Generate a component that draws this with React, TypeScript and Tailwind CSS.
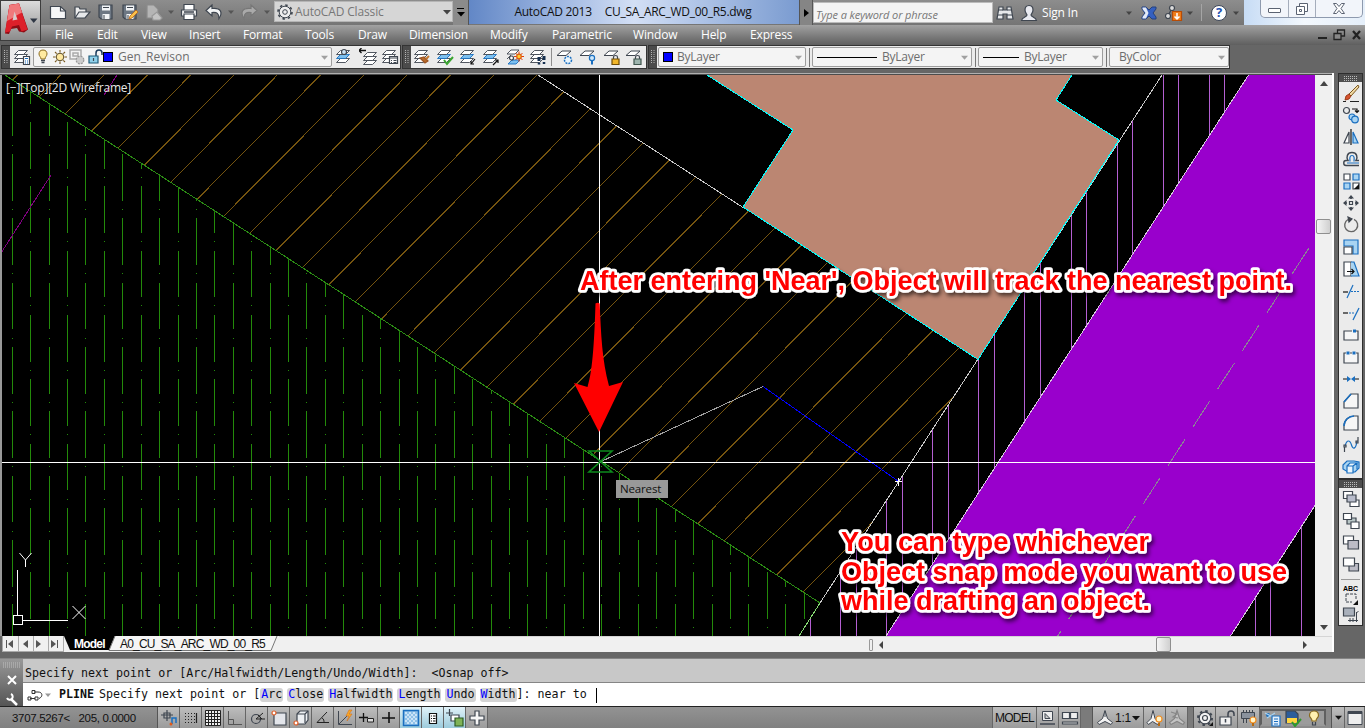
import React, { ReactNode } from "react";

const ink = "#3f4650";
const blue = "#1a6fc0";
const sky = "#a9d4f2";

function Ic({ children, className = "" }: { children: ReactNode; className?: string }) {
  return (
    <svg viewBox="0 0 18 18" width="18" height="18" fill="none" stroke={ink} strokeWidth="1.2" className={"shrink-0 " + className}>
      {children}
    </svg>
  );
}

function Cell({ w, children }: { w: string; children?: ReactNode }) {
  return <div className={"flex h-full shrink-0 items-center justify-center " + w}>{children}</div>;
}

function Caret({ color = "#333", s = 7 }: { color?: string; s?: number }) {
  return (
    <svg width={s} height={s} viewBox="0 0 8 8" className="shrink-0">
      <path d="M0 2h8L4 6.5z" fill={color} />
    </svg>
  );
}

/* ---------- title bar ---------- */

function AppButton() {
  return (
    <div className="flex h-[41px] w-[41px] shrink-0 items-center border border-[#3d3d3d] bg-linear-to-b from-[#dcdcdc] via-[#b4b4b4] to-[#8c8c8c]">
      <svg width="39" height="39" viewBox="0 0 39 39">
        <path d="M4 32.500L8.500 4 18 2.500l9 26-4 3-5-1-2-3.500-6 1-2 5z" fill="#8d0c14" />
        <path d="M4 31.500L8.500 4l9.500-1.500 8.500 26-6 2-2.500-6.500-7 1.500L9 30.500z" fill="#dd202a" />
        <path d="M8.500 4l9.500-1.500 3 9C16 14 10 18 6 20z" fill="#f0797c" />
        <path d="M11.500 19.500l2-9 3 8z" fill="#d9c9ca" />
        <path d="M29 17.500h7.500l-3.750 4.500z" fill="#2f3744" />
      </svg>
    </div>
  );
}

const Floppy = ({ pen }: { pen?: boolean }) => (
  <Ic>
    <path d="M2 2h13v14H4l-2-2z" fill="#6d7783" />
    <path d="M5 2.500h8v5H5zM5.500 11h7v5h-7z" fill="#f2f4f6" stroke="none" />
    <path d="M7 12v4M6 4.500h6" strokeWidth="1" />
    {pen && <path d="M8 16l1-3 6-6 2 2-6 6z" fill="#f9c04a" stroke="#b6661a" strokeWidth=".8" />}
  </Ic>
);

function QuickAccess() {
  return (
    <div className="flex h-full w-[233px] shrink-0 items-center pl-[5px] pb-px">
      <Cell w="w-[24px]">
        <Ic><path d="M1.500 3.500h10l5 4.500v7.500h-15z" fill="#f6f7f8" /><path d="M11.500 3.500v4.500h5" /></Ic>
      </Cell>
      <Cell w="w-[24px]">
        <Ic><path d="M2 15V4h4l1 2h6v3" fill="#eee" /><path d="M2 15l4-6h11l-5 6z" fill="#e6e8ea" /></Ic>
      </Cell>
      <Cell w="w-[24px]"><Floppy /></Cell>
      <Cell w="w-[24px]"><Floppy pen /></Cell>
      <Cell w="w-[24px]">
        <Ic><path d="M2 2h7l4 4v9H2z" fill="#b5b5b5" stroke="#8b8b8b" /><path d="M7 13l5-4 5 6-2 2H8z" fill="#c4c4c4" stroke="#999" /></Ic>
      </Cell>
      <Cell w="w-[10px]"><Caret color="#555" s={6} /></Cell>
      <Cell w="w-[26px]">
        <Ic><path d="M4 7V1.500h10V7" fill="#fff" /><path d="M1.500 7h15v6h-15z" fill="#f0f0f0" /><path d="M4 11h10v5.500H4z" fill="#fff" /><path d="M4 9h10" strokeWidth="1.500" /></Ic>
      </Cell>
      <Cell w="w-[24px]">
        <Ic><path d="M7 2L1 7.500 7 13V9.500c5-.6 7 1 7 6 4-6 2-11-7-10z" fill="#f2f4f5" /></Ic>
      </Cell>
      <Cell w="w-[10px]"><Caret color="#555" s={6} /></Cell>
      <Cell w="w-[26px]">
        <Ic><path d="M11 2l6 5.500L11 13V9.500c-5-.6-7 1-7 6-4-6-2-11 7-10z" fill="#aaa" stroke="#777" /></Ic>
      </Cell>
      <Cell w="w-[10px]"><Caret color="#555" s={6} /></Cell>
    </div>
  );
}

function TitleBar() {
  return (
    <div className="flex h-[25px] shrink-0 items-stretch bg-linear-to-b from-[#8d8d8d] to-[#757575]">
      <QuickAccess />
      <div className="flex h-[21px] w-[179px] shrink-0 items-center border border-[#b5b5b5] bg-[#d6d6d6] pl-[1px] pr-[1px] mt-px">
        <Ic>
          <circle cx="9" cy="9" r="5.800" fill="#eee" strokeWidth="1" /><circle cx="9" cy="9" r="7" strokeDasharray="2.500 3" strokeWidth="1.600" /><circle cx="9" cy="9" r="2.300" strokeWidth="1" />
        </Ic>
        <span className="ml-[1px] grow whitespace-nowrap text-[12px] tracking-[-0.15px] text-[#777]">AutoCAD Classic</span>
        <Caret color="#444" s={8} />
      </div>
      <div className="flex w-[16px] shrink-0 flex-col items-center justify-center gap-[1px] border-r border-[#555] bg-[#8b8b8b]">
        <div className="h-[1px] w-[7px] bg-black" />
        <Caret color="#000" s={8} />
      </div>
      <div className="flex h-[24px] w-[330px] shrink-0 items-center justify-center gap-[13px] whitespace-pre bg-linear-to-r from-[#6287c6] via-[#d3dff5] to-[#7a9bd0] pr-[2px] text-[12px] tracking-[-0.3px] text-[#111]">
        <span>AutoCAD 2013</span>
        <span>CU_SA_ARC_WD_00_R5.dwg</span>
      </div>
      <div className="flex w-[14px] shrink-0 items-center justify-center border-x border-[#555] bg-[#858585]">
        <svg width="5" height="8" viewBox="0 0 5 8"><path d="M0 0l5 4-5 4z" fill="#000" /></svg>
      </div>
      <div className="flex h-[21px] w-[180px] shrink-0 items-center self-center whitespace-nowrap border border-[#bbb] bg-[#f4f4f4] pl-[2px] pt-[3px] text-[11px] italic tracking-[-0.12px] text-[#777]">
        Type a keyword or phrase
      </div>
      <div className="flex w-[251px] shrink-0 items-center">
        <Cell w="w-[24px]">
          <Ic><path d="M3 3h4v3h4V3h4l2 12h-6v-5H7v5H1z" fill="#e6e8ea" /><path d="M3 6h4M11 6h4M2 11h5M11 11h5" /></Ic>
        </Cell>
        <Cell w="w-[24px]">
          <Ic><path d="M9 1.500c3 0 4 2 4 4.500s-1.500 4-2 5c0 2 5 2 5.500 5.500h-15C2 13 7 13 7 11c-.5-1-2-2.500-2-5s1-4.500 4-4.500z" fill="#e9eaf0" /></Ic>
        </Cell>
        <span className="ml-px w-[82px] whitespace-nowrap text-[12px] tracking-[-0.2px] text-white">Sign In</span>
        <Cell w="w-[10px]"><Caret color="#444" s={6} /></Cell>
        <Cell w="w-[29px]">
          <Ic><path d="M2 3h4l3 3 3-3h4v2l-3 4 3 4v2h-4l-3-3-3 3H2v-2l3-4-3-4z" fill="#3560c0" stroke="#25407d" strokeWidth="1" /><path d="M2.500 3.500H6L8.500 9 6 14.500H2.500V13l3-4-3-4z" fill="#e3eaf6" stroke="none" /></Ic>
        </Cell>
        <Cell w="w-[22px]">
          <Ic><circle cx="7" cy="4" r="2.500" fill="#ddd" /><circle cx="3" cy="12" r="2.500" fill="#ddd" /><path d="M6 6l-2 4" /><path d="M7.500 7.500h9v9h-9z" fill="#f07d1a" stroke="#b74c06" /><path d="M12 9v6M9.500 12.500L12 15l2.500-2.500" stroke="#fff" strokeWidth="1.500" /></Ic>
        </Cell>
        <Cell w="w-[10px]"><Caret color="#444" s={6} /></Cell>
        <div className="mx-[6px] h-[17px] w-[1px] bg-[#a5a5a5]" />
        <Cell w="w-[22px]">
          <div className="flex h-[16px] w-[16px] items-center justify-center rounded-full border border-[#3c4657] bg-white text-[13px] font-bold leading-none text-[#1f52b0]">?</div>
        </Cell>
        <Cell w="w-[12px]"><Caret color="#444" s={6} /></Cell>
      </div>
      <div className="flex grow items-start justify-end bg-linear-to-r from-[#c7dcf5] via-[#f3f8fd] to-[#e5effa] pr-[2px]">
        <div className="flex h-[18px] w-[103px] rounded-b-[5px] border border-t-0 border-[#8e9aae] bg-[#f2f5fa]">
          <div className="flex w-[28px] items-center justify-center border-r border-[#a5adbb]">
            <div className="mt-[3px] h-[5px] w-[13px] rounded-[1px] border border-[#5b6372] bg-white" />
          </div>
          <div className="flex w-[27px] items-center justify-center border-r border-[#a5adbb]">
            <svg width="12" height="12" viewBox="0 0 12 12" fill="#fff" stroke="#5b6372"><path d="M3.500.5h8v8h-8z" /><path d="M.5 3.500h8v8h-8z" /><path d="M3.500 6.500h2v2h-2z" /></svg>
          </div>
          <div className="flex grow items-center justify-center">
            <svg width="12" height="11" viewBox="0 0 12 11"><path d="M.5.5h3L6 3.500 8.500.5h3L8 5.500l3.500 5h-3L6 7.500l-2.500 3h-3L4 5.500z" fill="#fff" stroke="#5b6372" /></svg>
          </div>
        </div>
      </div>
    </div>
  );
}

function MenuBar() {
  return (
    <div className="flex h-[20px] shrink-0 items-center bg-linear-to-b from-[#a2a2a2] to-[#5f5f5f] pl-[14px] text-[12px] tracking-[-0.15px] text-white">
      <span className="w-[42px]">File</span>
      <span className="w-[44px]">Edit</span>
      <span className="w-[48px]">View</span>
      <span className="w-[54px]">Insert</span>
      <span className="w-[62px]">Format</span>
      <span className="w-[53px]">Tools</span>
      <span className="w-[51px]">Draw</span>
      <span className="w-[81px]">Dimension</span>
      <span className="w-[62px]">Modify</span>
      <span className="w-[81px]">Parametric</span>
      <span className="w-[68px]">Window</span>
      <span className="w-[49px]">Help</span>
      <span className="grow">Express</span>
      <svg width="46" height="14" viewBox="0 0 46 14" fill="none" stroke="#222" strokeWidth="1.300" className="mr-[2px]">
        <path d="M1 10h9" strokeWidth="2" /><path d="M20.500 2h7v6h-7z" /><path d="M17 5.500h7v6h-7z" fill="#888" /><path d="M36 3l7 8M43 3l-7 8" strokeWidth="2.300" />
      </svg>
    </div>
  );
}

/* ---------- layer toolbar ---------- */

function Grip() {
  return (
    <div className="flex h-full w-[8px] shrink-0 items-center justify-center bg-[#4b4b4b]">
      <svg width="4" height="14" viewBox="0 0 4 14"><path d="M.5 0v14M3 0v14" stroke="#b5b5b5" strokeDasharray="1 1" /></svg>
    </div>
  );
}

const sheets = (
  <g strokeWidth=".9">
    <path d="M1.500 14.500l4-4h9l-4 4z" fill="#fff" />
    <path d="M1.500 10.500l4-4h9l-4 4z" fill="#fff" />
    <path d="M1.500 6.500l4-4h9l-4 4z" fill="#fff" />
  </g>
);
const blueSheets = (
  <g strokeWidth=".9">
    <path d="M1.500 14.500l4-4h9l-4 4z" fill="#fff" />
    <path d="M1.500 10.500l4-4h9l-4 4z" fill="#7cc0f0" stroke={blue} />
    <path d="M1.500 6.500l4-4h9l-4 4z" fill="#fff" />
  </g>
);

function Combo({ w, children }: { w: string; children: ReactNode }) {
  return (
    <div className={"flex h-[20px] shrink-0 items-center rounded-[2px] border border-[#9d9d9d] bg-[#f4f4f4] pr-[3px] text-[12px] tracking-[-0.25px] text-[#6d6d6d] " + w}>
      {children}
      <div className="grow" />
      <Caret color="#a0a0a0" s={7} />
    </div>
  );
}

function LayerBar() {
  return (
    <div className="flex h-[28px] shrink-0 items-start bg-[#666] pl-[1px]">
      <div className="flex h-[24px] w-[400px] shrink-0 items-center border border-[#333] bg-[#ebebeb]">
        <Grip />
        <Cell w="w-[23px]"><Ic>{sheets}<path d="M10.500 8.500h6v8h-6z" fill="#fff" /><path d="M12 10.500h3M12 13h1M14 13h1M12 15h1M14 15h1" stroke={blue} /></Ic></Cell>
        <Combo w="w-[299px]">
          <Cell w="w-[18px]">
            <Ic><path d="M9 2c3 0 4 2 4 4s-2 3-2 5H7c0-2-2-3-2-5s1-4 4-4z" fill="#ffeaa0" stroke="#8a6a1e" strokeWidth="1" /><path d="M7 12.500h4M7.500 14.500h3" strokeWidth="1.500" /></Ic>
          </Cell>
          <Cell w="w-[16px]">
            <Ic><circle cx="9" cy="9" r="3.800" fill="#ffe9a0" stroke="#5a4a25" strokeWidth="1" /><path d="M9 2v2.500M9 13.500V16M2 9h2.500M13.500 9H16M4 4l1.700 1.700M12.300 12.300L14 14M14 4l-1.700 1.700M4 14l1.700-1.700" stroke="#7b5b20" strokeWidth="1.100" /></Ic>
          </Cell>
          <Cell w="w-[18px]">
            <Ic><path d="M2 2h11v9H2zM5 5h5v3H5z" stroke="#aaa" strokeWidth="1.500" /><circle cx="12" cy="12" r="3.800" fill="#ccc" stroke="#999" strokeDasharray="2 1" /></Ic>
          </Cell>
          <Cell w="w-[17px]">
            <Ic><path d="M10 8V5c0-4 6-4 6 0v2" stroke="#1b3b5c" strokeWidth="1.500" /><path d="M3 8h9v7H3z" fill="#8fd0ea" stroke="#1e5a79" /><path d="M7.500 10v3" /></Ic>
          </Cell>
          <div className="h-[10px] w-[10px] shrink-0 border border-black bg-[#0000ff]" />
          <span className="ml-[5px] tracking-[0px]">Gen_Revison</span>
        </Combo>
        <Cell w="w-[24px]"><Ic>{blueSheets}<circle cx="9" cy="4" r="2.500" fill="#cfe5f6" /></Ic></Cell>
        <Cell w="w-[23px]"><Ic><g transform="translate(3 2)">{sheets}</g><path d="M0 2.500h7M2.500 0L0 2.500 2.500 5" stroke="#111" strokeWidth="1.300" /></Ic></Cell>
        <Cell w="w-[22px]"><Ic>{sheets}<path d="M8.500 8.500h8v7h-8z" fill="#fff" /><path d="M8.500 10h8M10 12.500h1M12.500 12.500h3M10 14.500h1M12.500 14.500h3" /></Ic></Cell>
      </div>
      <div className="ml-[1px] flex h-[24px] w-[245px] shrink-0 items-center border border-[#333] bg-[#ebebeb]">
        <Grip />
        <Cell w="w-[22px]"><Ic>{sheets}<path d="M7 10l5 5 3-2-4-4z" fill="#b86a2a" stroke="#9b5423" /><path d="M13 11l3-3" stroke="#c47a32" strokeWidth="2" /></Ic></Cell>
        <Cell w="w-[23px]"><Ic>{blueSheets}<path d="M8 12l3 4 6-7" stroke="#3aa530" strokeWidth="2" /></Ic></Cell>
        <Cell w="w-[23px]"><Ic>{blueSheets}<path d="M16 11l-4 5M12 13v3h3" stroke="#111" /></Ic></Cell>
        <Cell w="w-[24px]"><Ic>{blueSheets}<path d="M11 17l5-5M13 12h3v3" stroke="#111" /></Ic></Cell>
        <Cell w="w-[23px]"><Ic><path d="M2 16l4-4h8l-4 4z" fill="#7cc0f0" stroke={blue} strokeWidth=".9" /><path d="M1 11l4-4M1 6l4-4h8l-4 4z" fill="#fff" strokeWidth=".9" /><circle cx="5.500" cy="10" r="2" fill="#fff" /><path d="M13 3.500v10M8 8.500h10M9.500 5l7 7M16.500 5l-7 7" stroke="#e0400f" strokeWidth="1" /><circle cx="13" cy="8.500" r="2.300" fill="#ffcf33" stroke="#e0600f" /></Ic></Cell>
        <Cell w="w-[23px]"><Ic>{sheets}<path d="M10 9v4M15 8v4" stroke="#152f4f" strokeWidth="3" /><path d="M10 14.500v2M15 14v2" stroke="#152f4f" strokeWidth="2.500" /></Ic></Cell>
        <div className="mx-[2px] h-[18px] w-[1px] bg-[#8e8e8e]" />
        <Cell w="w-[22px]"><Ic><path d="M1 7.500L6 3h9l-5 4.500z" fill="#fff" strokeWidth="1" /><circle cx="12" cy="12" r="3.500" fill="#e8f4fc" stroke={blue} strokeWidth="1.500" strokeDasharray="2 1" /></Ic></Cell>
        <Cell w="w-[24px]"><Ic><path d="M1 7.500L6 3h9l-5 4.500z" fill="#fff" strokeWidth="1" /><circle cx="13" cy="10" r="2.600" fill="#cfe8fa" stroke={blue} /><path d="M13 13v3.500" strokeWidth="2" stroke={blue} /></Ic></Cell>
        <Cell w="w-[23px]"><Ic><path d="M1 7.500L6 3h9l-5 4.500z" fill="#fff" strokeWidth="1" /><path d="M10.500 11V9c0-2 4-2 4 0v2" /><path d="M9 11h7v5.500H9z" fill="#f2b72a" stroke="#714e09" /></Ic></Cell>
        <Cell w="w-[22px]"><Ic><path d="M1 7.500L6 3h9l-5 4.500z" fill="#fff" strokeWidth="1" /><path d="M10.500 11V9c0-2 4-2 4 0v2" /><path d="M9 11h7v5.500H9z" fill="#9eb5ae" stroke="#41564f" /></Ic></Cell>
      </div>
      <div className="ml-[1px] flex h-[24px] w-[582px] shrink-0 items-center border border-[#333] bg-[#ebebeb]">
        <Grip />
        <Combo w="ml-[1px] w-[148px]">
          <div className="ml-[4px] h-[10px] w-[10px] border border-black bg-[#0000ff]" />
          <span className="ml-[4px]">ByLayer</span>
        </Combo>
        <div className="mx-[2px] h-[19px] w-[2px] border-r border-[#777]" />
        <Combo w="w-[160px]">
          <div className="ml-[4px] h-[1px] w-[60px] bg-black" />
          <span className="ml-[5px]">ByLayer</span>
        </Combo>
        <div className="mx-[2px] h-[19px] w-[2px] border-r border-[#777]" />
        <Combo w="w-[125px]">
          <div className="ml-[4px] h-[1px] w-[36px] bg-black" />
          <span className="ml-[5px]">ByLayer</span>
        </Combo>
        <div className="mx-[2px] h-[19px] w-[2px] border-r border-[#777]" />
        <Combo w="w-[120px]">
          <span className="ml-[9px]">ByColor</span>
        </Combo>
      </div>
    </div>
  );
}

/* ---------- drawing area ---------- */

const greenCols = Array.from({ length: 44 }, (_, i) => Math.floor(12.3 + i * 18.415) + 0.5).filter((x) => x < 820);
const orangeLines = Array.from({ length: 31 }, (_, i) => 60.7 + (i - 1) * 43.32);
const violetCols = Array.from({ length: 11 }, (_, i) => [840.5 + i * 46.1, 856 + i * 46.1]).flat().map((x) => Math.floor(x) + 0.5);

function Note({ x, y, w, children }: { x: number; y: number; w: number; children: string }) {
  return (
    <text x={x} y={y} textLength={w} lengthAdjust="spacingAndGlyphs" fontSize="27" fontWeight="bold" fill="#ff0000" stroke="#fff" strokeWidth="5.5" strokeLinejoin="round" paintOrder="stroke" fontFamily="Liberation Sans, Arial, sans-serif">
      {children}
    </text>
  );
}

function Drawing() {
  return (
    <svg width="1313" height="561" viewBox="2 75 1313 561" className="block shrink-0 bg-black">
      <defs>
        <clipPath id="hatchA"><path d="M5 75H538L978 360 820 603z" /></clipPath>
        <clipPath id="hatchB"><path d="M2 73.500L820 603.500 799 636H2z" /></clipPath>
        <clipPath id="hatchC"><path d="M1162 75H1315V636H799z" /></clipPath>
        <filter id="soft" x="-5%" y="-20%" width="110%" height="150%">
          <feDropShadow dx="2" dy="3" stdDeviation="2" floodColor="#000" floodOpacity=".6" />
        </filter>
      </defs>
      <g shapeRendering="crispEdges" fill="none" strokeWidth="1">
        <g clipPath="url(#hatchA)" stroke="#75540f">
          {orangeLines.map((x) => <path key={x} d={`M${x} 75L${x - 557.6} 636`} />)}
        </g>
        <g clipPath="url(#hatchB)" stroke="#238a0a">
          {greenCols.map((x, i) => (
            <path key={x} d={`M${x} ${i % 2 ? 57.5 : 25.3}V636`} strokeDasharray="46.700 8.200 1 8.450" />
          ))}
        </g>
        <g clipPath="url(#hatchC)" stroke="#b45fd2">
          {violetCols.map((x) => <path key={x} d={`M${x} 75V636`} />)}
          <path d="M810.500 75V636" />
        </g>
        <path d="M1248.500 75H1315V505.500L1230.500 636H886z" fill="#9900cc" />
        <path d="M1248.500 75L886 636M1315 505.500L1230.500 636" stroke="#d8c8e0" />
        <path d="M1308.700 248.300L1057.700 636" stroke="#8b8794" strokeDasharray="31 14.600" />
        <path d="M538 75L743 207.500M1162 75L820 603" stroke="#cacaca" />
        <path d="M820 603L799 636" stroke="#86d873" />
        <path d="M707 75L793 130 743 207 978 359.500 1119 140 1056 100 1072 75z" fill="#bb8672" />
        <path d="M707 75L793 130 743 207 978 359.500 1119 140 1056 100 1072 75" stroke="#00ffff" />
        <path d="M5 75L820 603" stroke="#2b8c14" />
        <path d="M51 175L2 251.500M117 75L104 95" stroke="#800080" />
        <path d="M600 462L763 386.500" stroke="#a0a0a0" />
        <path d="M763 386.500L898 481" stroke="#0000ff" />
        <path d="M895 481.500h7M898.500 478v8" stroke="#fff" />
        <path d="M599.500 75V636M2 462.500H1315" stroke="#fff" />
        <path d="M17.500 570v46M22 620.500h46M13.500 615.500h9v9h-9z" stroke="#fff" />
      </g>
      <path d="M72.500 606l13 13M85.500 606l-13 13M19.500 553l6 7 6-7M25.500 560v7" stroke="#fff" fill="none" />
      <path d="M589 451H612L589 472H612z" fill="none" stroke="#0c8a1c" strokeWidth="1.600" />
      <path d="M595.500 303.500Q597.500 302 599.700 303.500C601 335 602 360 609 386L623 382 599 432 574 383 587.500 387C593 370 594.500 335 595.500 303.500z" fill="#ff0000" />
      <g filter="url(#soft)">
        <Note x={580} y={290} w={712}>After entering 'Near', Object will track the nearest point.</Note>
        <Note x={841} y={550.5} w={308}>You can type whichever</Note>
        <Note x={841} y={580.5} w={446}>Object snap mode you want to use</Note>
        <Note x={841} y={610} w={309}>while drafting an object.</Note>
      </g>
    </svg>
  );
}

function Thumb() {
  return <div className="h-[15px] w-[15px] rounded-[2px] border border-[#8f8f8f] bg-linear-to-r from-[#f5f5f5] to-[#d0d0d0]" />;
}

function SheetTabs() {
  return (
    <div className="flex h-[16px] shrink-0 bg-[#f0f0f0] text-[#111]">
      <svg width="62" height="16" viewBox="0 0 62 16" className="shrink-0">
        <path d="M.5 0v16M16.500 0v16M31.500 0v16M46.500 0v16M.5 15.500H62M61.500 0v16" stroke="#aaa" />
        <g fill="#555"><path d="M4 4h1v8H4zM11 4v8L6 8zM26 4v8l-5-4zM34 4v8l5-4zM49 4v8l5-4zM55 4h1v8h-1z" /></g>
      </svg>
      <div className="relative flex w-[215px] shrink-0 items-center">
        <svg width="215" height="16" viewBox="0 0 215 16" className="absolute inset-0">
          <path d="M0 0h51l-6 14H6z" fill="#000" />
          <path d="M51 0l-6 14.500h162L213 0" fill="#f5f5f5" stroke="#777" />
        </svg>
        <span className="relative ml-[10px] w-[46px] whitespace-nowrap font-[Liberation_Sans] text-[12px] font-bold tracking-[-0.8px] text-white">Model</span>
        <span className="relative whitespace-nowrap font-[Liberation_Sans] text-[12px] tracking-[-0.82px]">A0_CU_SA_ARC_WD_00_R5</span>
      </div>
      <div className="flex grow items-center border-t border-[#d5d5d5]">
        <div className="ml-[590px] h-[12px] w-[4px] rounded-[1px] border border-[#999]" />
        <svg width="5" height="8" viewBox="0 0 5 8" className="ml-[5px]"><path d="M5 0L1 4l4 4z" fill="#444" /></svg>
        <div className="ml-[273px]"><Thumb /></div>
        <svg width="5" height="8" viewBox="0 0 5 8" className="ml-[132px]"><path d="M0 0l4 4-4 4z" fill="#444" /></svg>
      </div>
    </div>
  );
}

/* ---------- right toolbars ---------- */

const modifyIcons: ReactNode[] = [
  <g><path d="M16 1l-9 9 2 2 8-9z" fill="#f0d8a2" stroke="#7d5a20" strokeWidth="1" /><path d="M7 10l2 2-2 3-4 1 1-4z" fill="#d6522d" stroke="#9b3a18" strokeWidth="1" /><path d="M1 17.500h3M8 17.500h9" stroke="#222" /></g>,
  <g><circle cx="4.500" cy="4.500" r="3" /><circle cx="10" cy="11" r="3" fill={sky} stroke={blue} /><circle cx="13" cy="13.500" r="3.300" fill={sky} stroke={blue} /><path d="M10 3h5v3M13 4.500l2 2 2-2" stroke="#111" /></g>,
  <g><path d="M9 1v16" stroke="#111" /><path d="M7 4v11H2z" fill="#fff" /><path d="M11 4v11h5z" fill={sky} stroke={blue} /></g>,
  <g><path d="M17 15.500H4c-3 0-3-5 0-5h2c-2-3-1-8 4-8s6 5 4 8h3" stroke={ink} strokeWidth="1.400" /><path d="M17 13H5M8 11.500c0-2-1-6 2-6s2 4 2 6" stroke={blue} /></g>,
  <g><path d="M2 2h6v6H2z" fill="#fff" /><path d="M11 2h6v6h-6zM2 11h6v6H2z" fill={sky} stroke={blue} /><path d="M11 11h6v6h-6z" fill="#fff" /><path d="M17 12v5h-5z" fill="#111" stroke="none" /></g>,
  <g><path d="M9 2v3M9 13v3M2 9h3M13 9h3" strokeWidth="1.600" /><path d="M6 4.500L9 1l3 3.500zM6 13.500L9 17l3-3.500zM4.500 6L1 9l3.500 3zM13.500 6L17 9l-3.500 3z" fill={ink} stroke="none" /><path d="M7.500 7.500h3v3h-3z" /></g>,
  <g><path d="M6 3.500A6.500 6.500 0 1 0 12 3.300" strokeWidth="1.400" stroke="#666" /><path d="M6 1l4 2-3 3z" fill="#444" /></g>,
  <g><path d="M2 2h14v14h-5V8H2z" fill={sky} stroke={blue} /><path d="M2 9h8v7H2z" fill="#fff" /></g>,
  <g><path d="M2 2h7v14H2z" fill="#fff" /><path d="M9 2h3l5 14H9" fill={sky} stroke={blue} /><path d="M5 11.500h7M9.500 9l2.500 2.500L9.500 14" stroke="#111" /></g>,
  <g><path d="M1 10h5" stroke="#111" /><path d="M5 16l6-13" stroke={blue} /><path d="M9 9.500h8" stroke={blue} strokeDasharray="2 1" /></g>,
  <g><path d="M1 9h5" stroke="#111" /><path d="M7 9h6" stroke={blue} strokeDasharray="2 1" /><path d="M11 16l6-12" stroke={blue} /></g>,
  <g><path d="M10 5H2v9h14V5h-2" fill="#f6f6f6" /><path d="M11 3.500h3v3h-3z" fill={blue} stroke="none" /></g>,
  <g><path d="M4 5H2v10h14V5h-2M8 5h2" fill="#f6f6f6" /><path d="M4.500 3.500h3v3h-3zM10.500 3.500h3v3h-3z" fill={blue} stroke="none" /></g>,
  <g><path d="M1 9h4M13 9h4" stroke="#111" /><path d="M5 6l4 3-4 3zM13 6L9 9l4 3z" fill={blue} stroke="none" /></g>,
  <g><path d="M2 10l7-8h7v14H2z" fill="#f6f6f6" /><path d="M2 10l7-8" stroke={blue} strokeWidth="1.500" /></g>,
  <g><path d="M2 16v-4C2 6 7 2 12 2h4v14z" fill="#f6f6f6" /><path d="M2 12C2 6 7 2 12 2" stroke={blue} strokeWidth="1.500" /></g>,
  <g><path d="M3 10c2-7 5-6 6.500-1s4.500 4 5.500-4" stroke={blue} strokeWidth="1.200" /><path d="M2 9h2v2H2zM14 5h2v2h-2zM2.500 11v5M16 1v4" /></g>,
  <g><path d="M1 7l4-4h7l5 1v6l-4 4H6l-5-3z" fill={sky} stroke={blue} /><path d="M5 8h6v7H5zM5 8l3-3h7l-4 3M15 5v6" fill="#eaf5fc" stroke={blue} /></g>,
];

const orderIcons: ReactNode[] = [
  <g><path d="M1.500 1.500h9v7h-9zM8 10h9v6.500H8z" fill="#fff" /><path d="M5 5h9v7H5z" fill="#b8bccb" /></g>,
  <g><path d="M5 6h9v6H5z" fill="#b8c6c6" /><path d="M1.500 1.500h8v6h-8zM9 10h8v6.500H9z" fill="#fff" /></g>,
  <g><path d="M1.500 2h10v8h-10z" fill="#fff" /><path d="M6 6.500h10.500V15H6z" fill="#bcbcc6" /></g>,
  <g><path d="M7 7.500h9.500V15H7z" fill="#bcbcc6" /><path d="M1.500 2h11v8h-11z" fill="#fff" /></g>,
];

function VGrip() {
  return (
    <div className="flex h-[8px] shrink-0 items-center justify-center bg-[#4e4e4e]">
      <svg width="14" height="5" viewBox="0 0 14 5"><path d="M0 .5h14M0 2.500h14M0 4.500h14" stroke="#bbb" strokeDasharray="1 1" /></svg>
    </div>
  );
}

function ToolCell({ children }: { children: ReactNode }) {
  return <div className="flex h-[22px] shrink-0 items-center justify-center"><Ic>{children}</Ic></div>;
}

function RightTools() {
  return (
    <div className="flex w-[25px] shrink-0 flex-col">
      <div className="flex h-[406px] flex-col border border-[#2e2e2e] bg-[#ebebeb]">
        <VGrip />
        {modifyIcons.map((g, i) => <ToolCell key={i}>{g}</ToolCell>)}
      </div>
      <div className="flex h-[147px] flex-col border border-[#2e2e2e] bg-[#ebebeb]">
        <VGrip />
        {orderIcons.map((g, i) => <ToolCell key={i}>{g}</ToolCell>)}
        <div className="mx-[2px] my-[3px] h-[1px] shrink-0 bg-[#999]" />
        <div className="mt-[2px] flex h-[22px] shrink-0 flex-col items-center">
          <span className="font-[Liberation_Sans] text-[7px] font-bold leading-[8px] text-black">ABC</span>
          <svg width="18" height="13" viewBox="0 0 18 13"><path d="M4 1h10v5M4 1v8h6" fill="none" stroke={ink} strokeDasharray="3 1" /><path d="M16 7v5h-5z" fill="#111" /></svg>
        </div>
        <div className="flex h-[20px] shrink-0 items-start justify-center">
          <Ic><path d="M1.500 1h11v8h-11z" fill="#a9b0bb" /><path d="M6 13.500h10M14.500 5v10M16.500 4l-2 2M8 11v4M11 11v4" strokeWidth="1" /></Ic>
        </div>
      </div>
    </div>
  );
}

/* ---------- command line ---------- */

function Opt({ k, rest }: { k: string; rest: string }) {
  return (
    <span className="mr-[4px] rounded-[3px] bg-[#d4d4d4] px-[1px] py-[1px]">
      <span className="text-[#0000ff]">{k}</span>{rest}
    </span>
  );
}

function CommandLine() {
  return (
    <div className="flex h-[48px] shrink-0 border-t border-[#858585] bg-[#c8c8c8]">
      <div className="flex w-[23px] shrink-0 flex-col items-center bg-linear-to-b from-[#999] to-[#555] pt-[3px]">
        <svg width="18" height="6" viewBox="0 0 18 6"><path d="M0 1h18M0 3h18M0 5h18" stroke="#c0c0c0" strokeDasharray="1 1" /></svg>
        <svg width="12" height="12" viewBox="0 0 12 12" className="mt-[6px]"><path d="M2 2l8 8M10 2l-8 8" stroke="#fff" strokeWidth="2" /></svg>
        <svg width="14" height="14" viewBox="0 0 14 14" className="mt-[6px]"><path d="M12 13L6 7" stroke="#fff" strokeWidth="2.500" /><path d="M6 2a3 3 0 1 1-4 4" stroke="#fff" strokeWidth="2" fill="none" /></svg>
      </div>
      <div className="flex grow flex-col font-[DejaVu_Sans_Mono] text-[11.650px] text-[#111]">
        <div className="flex h-[24px] items-center whitespace-pre border-b border-[#858585] pl-[2px] pt-[7px]">
          {"Specify next point or [Arc/Halfwidth/Length/Undo/Width]:  <Osnap off>"}
        </div>
        <div className="flex grow items-center whitespace-pre bg-white pl-[4px] pt-px">
          <svg width="18" height="14" viewBox="0 0 18 14" fill="none" stroke="#333"><path d="M3 10.500h5M1 9h3v3H1zM8 9h3v3H8zM7 4h4c5 0 5 5 1 6.500M5 2.500h3v3H5z" /></svg>
          <Caret color="#999" s={6} />
          <span className="ml-[8px] w-[40px] font-bold">PLINE</span>
          <span>Specify next point or [</span>
          <Opt k="A" rest="rc" /><Opt k="C" rest="lose" /><Opt k="H" rest="alfwidth" /><Opt k="L" rest="ength" /><Opt k="U" rest="ndo" />
          <span className="rounded-[3px] bg-[#d4d4d4] px-[1px] py-[1px]"><span className="text-[#0000ff]">W</span>idth</span>
          <span>]: near to</span>
          <div className="ml-[9px] h-[15px] w-[1px] bg-black" />
        </div>
      </div>
    </div>
  );
}

/* ---------- status bar ---------- */

function SBtn({ w = "w-[22px]", on, children }: { w?: string; on?: boolean; children?: ReactNode }) {
  return (
    <div className={"flex h-full shrink-0 items-center justify-center border-r border-[#666] " + (on ? "bg-linear-to-b from-[#e0f2f8] to-[#9ccbdc] " : "bg-linear-to-b from-[#bdbdbd] to-[#9b9b9b] ") + w}>
      {children}
    </div>
  );
}

const snapIcons: { on?: boolean; g: ReactNode }[] = [
  { g: <g><path d="M1 6h12M7 1v11" /><path d="M4 4h6v5H4z" /><path d="M12 15V9h4v5" stroke={blue} strokeWidth="1.500" /><circle cx="11" cy="15" r="1.500" fill="#e05a1a" stroke="none" /></g> },
  { g: <g stroke="#222" strokeDasharray="1 2"><path d="M3 4.500h10M3 7.500h10M3 10.500h10M3 13.500h10" /><path d="M14.500 4v10" strokeDasharray="none" /></g> },
  { g: <path d="M1.500 1.500h15v15h-15zM4.500 2v14M7.500 2v14M10.500 2v14M13.500 2v14M2 4.500h14M2 7.500h14M2 10.500h14M2 13.500h14" stroke="#222" strokeWidth="1" fill="#eee" /> },
  { g: <path d="M2.500 2v13.500H16M2.500 10.500h5v5" stroke="#555" strokeWidth="1" /> },
  { g: <g><circle cx="8" cy="10" r="4.500" /><path d="M15 4L8 10h9M10 6l4 4" stroke="#222" strokeWidth="1" /></g> },
  { g: <g><path d="M4 4h12v12H4z" fill="#e3e5ea" /><circle cx="4" cy="4" r="2" fill="#fff" stroke="#e0602a" /></g> },
  { g: <g><path d="M5 5l3-3h8v9l-3 4H5z" fill="#eef0f3" /><path d="M5 5h8v9M13 5l3-3" /><circle cx="4" cy="14" r="2" fill="#fff" stroke="#e0602a" /></g> },
  { g: <path d="M15 13.500H3L13 3M8 9c2 1 2 3 2 4.500" stroke="#222" strokeWidth="1" /> },
  { g: <g><path d="M2.500 2v13.500H16M3 15l8-8" strokeWidth="1" /><path d="M13 1l-3 6h3l-2 5 5-7h-3l3-4z" fill="#f7a928" stroke="#d9701a" strokeWidth=".6" /></g> },
  { g: <g><path d="M1 8.500h9M5.500 4v9" stroke="#111" strokeWidth="1.300" /><path d="M9.500 9.500h6v3.500h-6z" fill="#ddd" stroke="#222" strokeWidth="1" /></g> },
  { g: <path d="M2 9h13M9 3v11" stroke="#111" strokeWidth="1.600" /> },
  { on: true, g: <g><path d="M1.500 1.500h15v15h-15z" fill="#8fc1e8" stroke={blue} strokeWidth="1.500" /><path d="M3 4h12M3 8h12M3 12h12" stroke="#c9e3f7" strokeWidth="2" strokeDasharray="2 2" /><path d="M5 6h11M5 10h11M5 14h11" stroke="#c9e3f7" strokeWidth="2" strokeDasharray="2 2" /></g> },
  { on: true, g: <g><path d="M5.500 4.500h7v10h-7z" fill="#fff" stroke="#111" /><path d="M7 7h1M9 7h2.500M7 9.500h1M9 9.500h2.500M7 12h1M9 12h2.500" stroke="#111" strokeWidth="1" /></g> },
  { on: true, g: <g><path d="M0 4h7M3.500 0v7" /><path d="M5 6h8v6H5z" fill="#fff" /><path d="M9 9h8v8H9z" fill="#7fb357" stroke="#2c5d24" /></g> },
  { g: <path d="M7 2h4v5h5v4h-5v5H7v-5H2V7h5z" fill="#f5f5f5" /> },
];

function StatusBar() {
  return (
    <div className="flex h-[22px] shrink-0 items-stretch border-t border-[#222] bg-linear-to-b from-[#939393] to-[#808080]">
      <div className="flex w-[158px] shrink-0 items-center whitespace-pre border-r border-[#555] pl-[12px] pt-[2px] font-[Liberation_Sans] text-[11.500px] tracking-[-0.32px] text-[#111]">
        {"3707.5267<   205, 0.0000"}
      </div>
      {snapIcons.map((s, i) => <SBtn key={i} on={s.on}><Ic>{s.g}</Ic></SBtn>)}
      <div className="grow" />
      <SBtn w="w-[45px] border-l"><span className="font-[Liberation_Sans] text-[12px] tracking-[-0.7px] text-[#111]">MODEL</span></SBtn>
      <SBtn><Ic><path d="M3.500 2.500h10v9h-10z" fill="#eee" strokeWidth="1" /><path d="M1 15h15" strokeWidth="1.500" /><path d="M6 4.500v5h5z" fill="#ccc" strokeWidth="1" /></Ic></SBtn>
      <SBtn><Ic><path d="M1.500 3.500h7v6h-7zM9.500 3.500h7v6h-7z" fill="#eee" /><path d="M1.500 13h15v2h-15z" fill="#ccc" /></Ic></SBtn>
      <div className="w-[12px] shrink-0 border-r border-[#555] bg-[#7b7b7b]" />
      <SBtn w="w-[51px]">
        <Ic><path d="M9 1.500l2.500 8 5 4-1.500 2-6-3-6 3-1.500-2 5-4z" fill="#f2f2f2" strokeWidth="1" /><path d="M9 2v6" strokeWidth="1" /></Ic>
        <span className="mx-[1px] font-[Liberation_Sans] text-[12px] tracking-[-0.3px] text-[#111]">1:1</span>
        <Caret color="#111" s={8} />
      </SBtn>
      <SBtn><Ic><path d="M7 1.500l2 8 4 4-1.500 2-5-3-4 3-1.500-2 4-4z" fill="#f2f2f2" strokeWidth="1" /><circle cx="13" cy="10" r="3" fill="#fff4c9" stroke="#f28c1f" /><path d="M13 14v3" stroke="#b86a10" strokeWidth="2" /></Ic></SBtn>
      <SBtn><Ic><path d="M9 1.500l2.500 8 5 4-1.500 2-6-3-6 3-1.500-2 5-4z" fill="#c4c4c4" stroke="#858585" /><path d="M3 3l6 2-4 3 5 1" stroke="#888" /></Ic></SBtn>
      <div className="w-[6px] shrink-0 border-r border-[#555] bg-[#7b7b7b]" />
      <SBtn><Ic><circle cx="9" cy="9" r="7" strokeDasharray="2.500 3" strokeWidth="2" /><circle cx="9" cy="9" r="5.800" fill="#f2f2f2" /><circle cx="9" cy="9" r="2.500" /><path d="M17 13v4h-4z" fill="#111" stroke="none" /></Ic></SBtn>
      <SBtn><Ic><path d="M10 8V5c0-4 6-4 6 0v2" strokeWidth="1.500" /><path d="M2 8h11v8H2z" fill="#f2f2f2" /><path d="M7.500 10v3.500" strokeWidth="1.500" /></Ic></SBtn>
      <SBtn><Ic><path d="M3.500 1v13M6.500 1v13M9.500 1v9M12.500 1v4" strokeWidth="1" /><path d="M1.500 3.500h13v6h-13z" fill="#8a929d" strokeWidth="1" /><circle cx="13" cy="11" r="3" fill="#fff4c9" stroke="#f28c1f" /><path d="M13 14v3" stroke="#b86a10" strokeWidth="2" /></Ic></SBtn>
      <div className="flex w-[72px] shrink-0 items-center border-r border-[#555] bg-[#8b8b8b]">
        <div className="flex h-[17px] w-[66px] items-center justify-around border-2 border-[#606060] border-b-[#999] bg-[#9c9c9c]">
          <Ic><circle cx="5" cy="6" r="2" fill={blue} stroke="none" /><path d="M2 4l10 5M4 9l8-5" stroke={sky} /><path d="M9 7h8v10H9z" fill="#e4f0fb" stroke={blue} /><path d="M11 10h4M11 12.500h4M11 15h4" stroke={blue} /></Ic>
          <Ic><path d="M2 2h9l3 3v9H2z" fill="#2c5d9b" /><path d="M3 9h10v5H3z" fill="#ffd541" stroke="none" /><path d="M8 13l3 4 6-7" stroke="#2e9a2c" strokeWidth="2" /></Ic>
          <Ic><path d="M9 2c3 0 4.500 2 4.500 4.500S11 9 11 12H7c0-3-2.500-3-2.500-5.500S6 2 9 2z" fill="#fff0b0" stroke="#8a6a1e" /><path d="M7.500 13v3h3v-3" /></Ic>
        </div>
      </div>
      <SBtn w="w-[13px]"><Caret color="#111" s={7} /></SBtn>
      <SBtn w="w-[20px]"><Ic><path d="M2 2.500h14v13H2z" fill="#eee" strokeWidth="1" /><path d="M2 4h14" strokeWidth="2" /></Ic></SBtn>
    </div>
  );
}

export default function App() {
  return (
    <div className="flex h-[728px] w-[1365px] flex-col overflow-hidden bg-[#666] font-[Open_Sans,Noto_Sans,sans-serif] leading-none">
      <div className="flex h-[45px] shrink-0 bg-linear-to-b from-[#858585] to-[#5f5f5f]">
        <AppButton />
        <div className="flex grow flex-col">
          <TitleBar />
          <MenuBar />
        </div>
      </div>
      <LayerBar />
      <div className="flex h-[579px] shrink-0">
        <div className="flex w-[1334px] shrink-0 flex-col border-r-2 border-white">
          <div className="h-[2px] shrink-0 border-t border-[#b0b0b0] bg-[#4c4c4c]" />
          <div className="relative flex h-[561px] shrink-0 border-l-2 border-[#999]">
            <Drawing />
            <div className="flex w-[17px] shrink-0 flex-col items-center bg-[#f0f0f0]">
              <svg width="8" height="5" viewBox="0 0 8 5" className="mt-[6px]"><path d="M0 5h8L4 0z" fill="#444" /></svg>
              <div className="mt-[133px]"><Thumb /></div>
              <svg width="8" height="5" viewBox="0 0 8 5" className="mt-[391px]"><path d="M0 0h8L4 5z" fill="#444" /></svg>
            </div>
            <div className="absolute left-[4px] top-[7px] whitespace-nowrap text-[12px] font-medium tracking-[-0.2px] text-[#e8e8e8]">[−][Top][2D Wireframe]</div>
            <div className="absolute left-[614px] top-[405px] flex h-[18px] w-[52px] items-center bg-[#999] pl-[4px] text-[11.500px] tracking-[-0.15px] text-[#111]">Nearest</div>
          </div>
          <div className="pl-[2px]"><SheetTabs /></div>
        </div>
        <div className="w-[4px] shrink-0" />
        <RightTools />
      </div>
      <div className="h-[6px] shrink-0" />
      <CommandLine />
      <StatusBar />
    </div>
  );
}
